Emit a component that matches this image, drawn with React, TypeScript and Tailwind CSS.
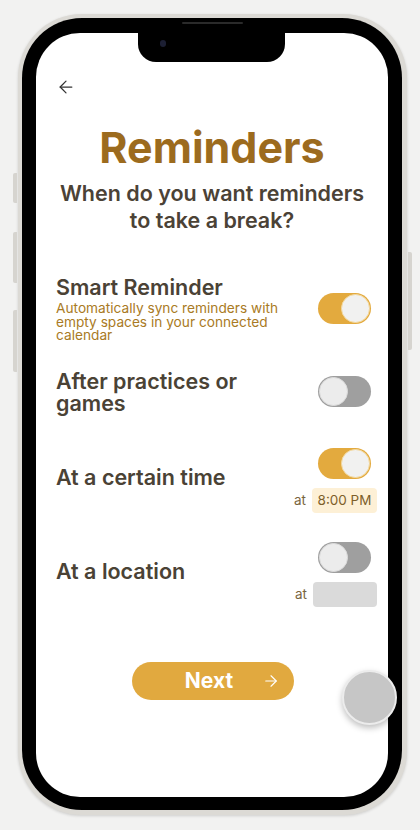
import { ArrowLeft, ArrowRight } from "lucide-react";

const Toggle: React.FC<{ on: boolean }> = ({ on }) => {
    return (
        <div
            className={
                on
                    ? "w-[53px] h-[31px] rounded-full bg-[#e3aa3e] p-[1px] flex justify-end"
                    : "w-[53px] h-[31px] rounded-full bg-[#9f9f9f] p-[1px] flex justify-start"
            }
        >
            <div
                className={
                    on
                        ? "w-[29px] h-[29px] rounded-full bg-[#f1f1f0] border border-[#f3d9a0]"
                        : "w-[29px] h-[29px] rounded-full bg-[#ececec] border border-[#dcdcdc]"
                }
            />
        </div>
    );
};

export default function App() {
    return (
        <div className="w-[420px] h-[830px] bg-[#f2f2f1] pt-[14px] pl-[18px] overflow-hidden font-['Inter',sans-serif]">
            {/* phone frame */}
            <div className="relative w-[389px] h-[801px] rounded-[64px] bg-[#dcdad5] pl-[4px] pr-[5px] pt-[4px] pb-[5px] shadow-[0_1px_3px_rgba(0,0,0,0.15)]">
                {/* side buttons */}
                <div className="absolute left-[-5px] top-[159px] w-[4px] h-[30px] rounded-l-[2px] bg-[#d6d4cf]" />
                <div className="absolute left-[-5px] top-[218px] w-[4px] h-[51px] rounded-l-[2px] bg-[#d6d4cf]" />
                <div className="absolute left-[-5px] top-[296px] w-[4px] h-[62px] rounded-l-[2px] bg-[#d6d4cf]" />
                <div className="absolute right-[-5px] top-[238px] w-[4px] h-[98px] rounded-r-[2px] bg-[#d6d4cf]" />

                <div className="relative w-full h-full rounded-[60px] bg-black pl-[14px] pr-[14px] pt-[15px] pb-[13px]">
                    {/* speaker */}
                    <div className="absolute left-[160px] top-[4px] w-[61px] h-[2px] rounded-full bg-[#2a2a2a]" />

                    {/* screen */}
                    <div className="relative w-full h-full rounded-[44px] bg-white overflow-hidden">
                        {/* notch */}
                        <div className="absolute left-[102px] top-0 w-[147px] h-[29px] bg-black rounded-b-[18px]">
                            <div className="absolute left-[22px] top-[7px] w-[6px] h-[7px] rounded-full bg-[#1c1f33]" />
                        </div>

                        <div className="flex flex-col pl-[20px] pr-[11px]">
                            {/* back */}
                            <div className="mt-[44px] h-[20px] flex items-center">
                                <ArrowLeft size={20} strokeWidth={1.5} className="text-[#333333]" />
                            </div>

                            {/* title */}
                            <h1 className="mt-[26px] text-center text-[43px] leading-[48px] font-bold text-[#9c6b1e] pr-[9px]">
                                Reminders
                            </h1>
                            <p className="mt-[9px] text-center text-[21.5px] leading-[27px] font-semibold text-[#4b4236] pr-[9px]">
                                When do you want reminders
                                <br />
                                to take a break?
                            </p>

                            {/* Smart Reminder */}
                            <div className="mt-[41px] flex items-center justify-between">
                                <div className="w-[236px]">
                                    <div className="text-[21.5px] leading-[25px] font-semibold text-[#4a4235]">Smart Reminder</div>
                                    <div className="mt-[2px] text-[13.7px] leading-[13.5px] text-[#a97a24]">
                                        Automatically sync reminders with empty spaces in your connected calendar
                                    </div>
                                </div>
                                <div className="mr-[6px]">
                                    <Toggle on />
                                </div>
                            </div>

                            {/* After practices */}
                            <div className="mt-[27px] flex items-center justify-between">
                                <div className="text-[21.5px] leading-[22px] font-semibold text-[#4a4235]">
                                    After practices or
                                    <br />
                                    games
                                </div>
                                <div className="mr-[6px]">
                                    <Toggle on={false} />
                                </div>
                            </div>

                            {/* certain time */}
                            <div className="mt-[34px] flex items-center justify-between">
                                <div className="text-[21.5px] leading-[25px] font-semibold text-[#4a4235] mb-[5px]">At a certain time</div>
                                <div className="flex flex-col items-end gap-[9px]">
                                    <div className="mr-[6px]">
                                        <Toggle on />
                                    </div>
                                    <div className="flex items-center gap-[6px]">
                                        <span className="text-[13.5px] text-[#7a6540]">at</span>
                                        <div className="w-[65px] h-[25px] rounded-[4px] bg-[#fdf0d6] flex items-center justify-center text-[13.5px] text-[#7d5f2a]">
                                            8:00 PM
                                        </div>
                                    </div>
                                </div>
                            </div>

                            {/* location */}
                            <div className="mt-[29px] flex items-center justify-between">
                                <div className="text-[21.5px] leading-[25px] font-semibold text-[#4a4235] mb-[6px]">At a location</div>
                                <div className="flex flex-col items-end gap-[9px]">
                                    <div className="mr-[6px]">
                                        <Toggle on={false} />
                                    </div>
                                    <div className="flex items-center gap-[6px]">
                                        <span className="text-[13.5px] text-[#7a6540]">at</span>
                                        <div className="w-[64px] h-[25px] rounded-[4px] bg-[#dadada]" />
                                    </div>
                                </div>
                            </div>

                            {/* next */}
                            <button className="relative mt-[55px] ml-[76px] w-[162px] h-[38px] rounded-full bg-[#e1a93f] flex items-center justify-center text-white text-[21px] font-bold">
                                <span className="mr-[8px]">Next</span>
                                <ArrowRight size={18} strokeWidth={1.5} className="absolute right-[14px] top-[10px]" />
                            </button>
                        </div>
                    </div>
                </div>

                {/* assistive touch */}
                <div className="absolute left-[324px] top-[656px] w-[55px] h-[55px] rounded-full bg-[#c6c6c6] border-[2px] border-[#ececec] shadow-[0_3px_6px_rgba(0,0,0,0.25)]" />
            </div>
        </div>
    );
}
